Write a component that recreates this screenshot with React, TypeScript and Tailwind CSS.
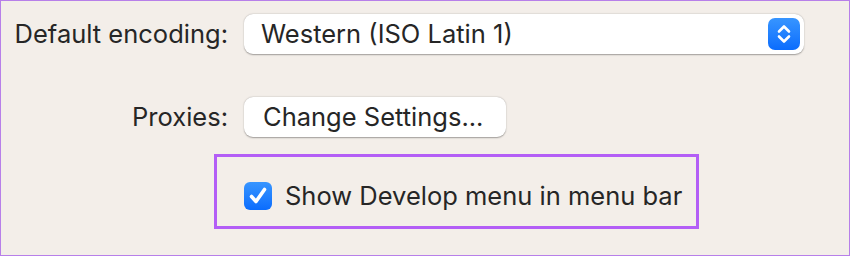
const font = { fontFamily: "Inter, 'Noto Sans', 'Liberation Sans', sans-serif" };

function Stepper() {
  return (
    <div className="flex h-[32px] w-[32px] items-center justify-center rounded-[7px] bg-gradient-to-b from-[#3795ff] to-[#0a6cfd]">
      <svg width="16" height="24" viewBox="0 0 16 24" fill="none">
        <path d="M3 9.5 L8 4.5 L13 9.5" stroke="white" strokeWidth="2.6" strokeLinecap="round" strokeLinejoin="round" />
        <path d="M3 14.5 L8 19.5 L13 14.5" stroke="white" strokeWidth="2.6" strokeLinecap="round" strokeLinejoin="round" />
      </svg>
    </div>
  );
}

function Checkbox() {
  return (
    <div className="flex h-[28px] w-[28px] shrink-0 items-center justify-center rounded-[6px] bg-gradient-to-b from-[#3795ff] to-[#0a6cfd]">
      <svg width="22" height="22" viewBox="0 0 22 22" fill="none">
        <path d="M4.5 11.5 L9 16.5 L17.5 4.5" stroke="white" strokeWidth="3.6" strokeLinecap="round" strokeLinejoin="round" />
      </svg>
    </div>
  );
}

export default function App() {
  return (
    <div
      className="box-border h-[256px] w-[850px] overflow-hidden border-[1.5px] border-[#b77fe9] bg-[#f3eee9] text-[25.5px] text-[#262626]"
      style={font}
    >
      <div className="mt-[13px] flex items-center">
        <div className="w-[227px] text-right">Default encoding:</div>
        <div className="ml-[16px] flex h-[40px] w-[560px] items-center justify-between rounded-[9px] bg-white pl-[17px] pr-[4px] shadow-[0_0.5px_1.5px_rgba(0,0,0,0.35)]">
          <span>Western (ISO Latin 1)</span>
          <Stepper />
        </div>
      </div>

      <div className="mt-[43px] flex items-center">
        <div className="w-[227px] text-right">Proxies:</div>
        <button className="ml-[16px] flex h-[40px] w-[262px] items-center rounded-[9px] bg-white pl-[19px] shadow-[0_0.5px_1.5px_rgba(0,0,0,0.35)]">
          Change Settings...
        </button>
      </div>

      <div className="ml-[213px] mt-[17px] flex h-[75px] w-[485px] items-start border-[3px] border-[#b35ef6] pl-[27px] pt-[25px]">
        <Checkbox />
        <span className="ml-[13px] leading-[28px]">Show Develop menu in menu bar</span>
      </div>
    </div>
  );
}
